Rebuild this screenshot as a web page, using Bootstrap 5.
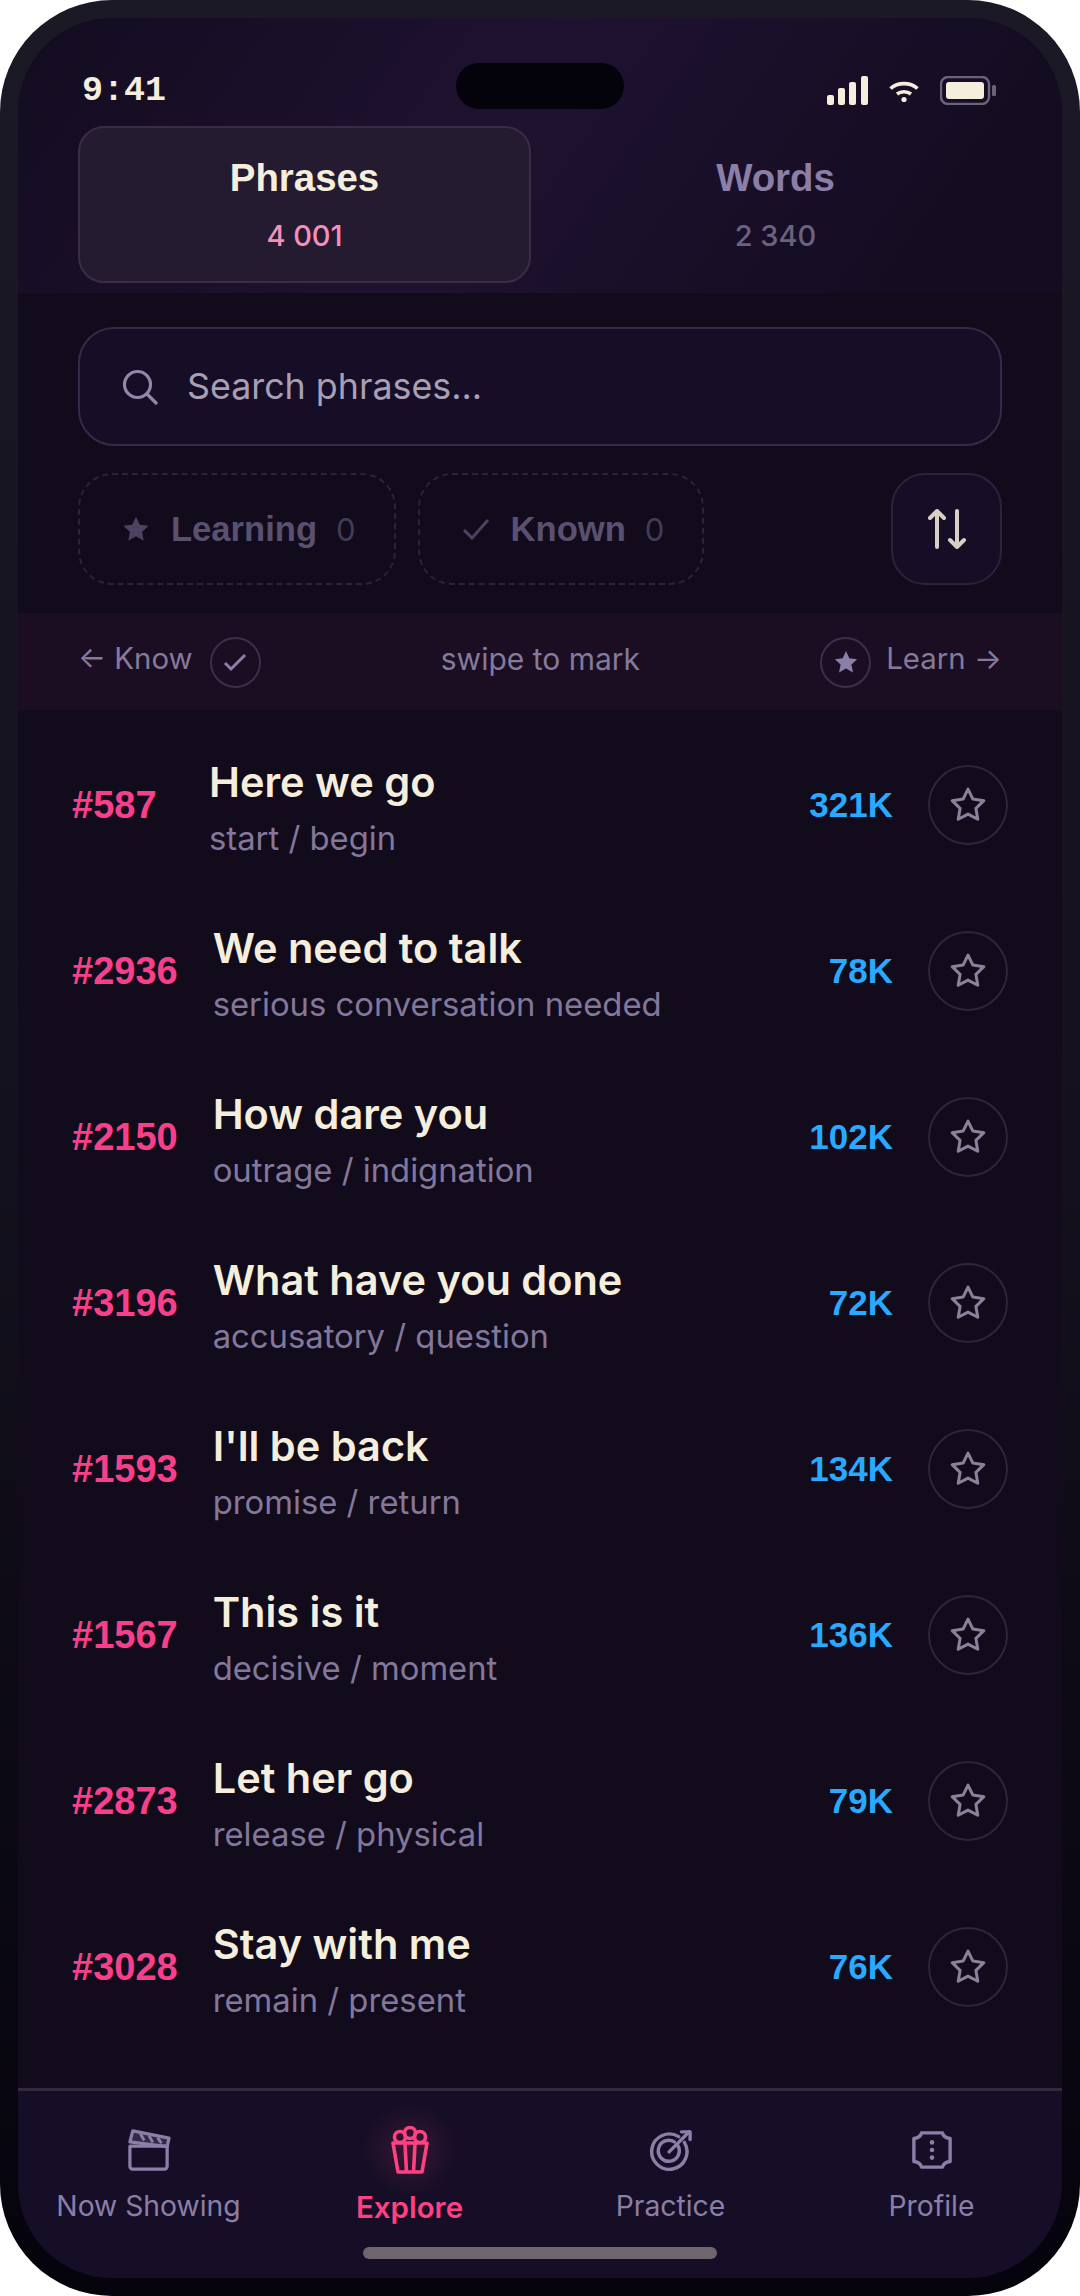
<!DOCTYPE html>
<html lang="en">
<head>
  <meta charset="UTF-8" />
  <meta name="viewport" content="width=device-width, initial-scale=1.0" />
  <title>Explore Phrases</title>
  <link href="https://cdn.jsdelivr.net/npm/bootstrap@5.3.3/dist/css/bootstrap.min.css" rel="stylesheet">
  <style>
    body { background: #fff; margin: 0; font-family: Inter, "Liberation Sans", sans-serif; }
    .phone-shell { width: 1080px; height: 2296px; padding: 18px; border-radius: 112px; background: linear-gradient(180deg, #1c1926 0%, #14111e 50%, #05030c 100%); }
    .phone-screen { height: 100%; border-radius: 94px; overflow: hidden; background: #110b1c; }
    .top-area { height: 275px; padding: 0 60px 10px; background: linear-gradient(125deg, #130c20 0%, #1f1230 45%, #140d22 85%); }
    .status-row { height: 108px; padding: 0 6px 15px 4px; position: relative; }
    .clock { font: 700 35px/40px "Liberation Mono", monospace; color: #f5eedc; }
    .island { position: absolute; left: 378px; top: 45px; width: 168px; height: 46px; border-radius: 23px; background: #04020a; }
    .seg-tab { height: 157px; width: 453px; border-radius: 26px; border: 2px solid transparent; font-family: "Liberation Sans", sans-serif; }
    .seg-tab.is-on { background: #241b30; border-color: #392c47; }
    .seg-name { font-size: 38.400px; font-weight: 700; color: #8b7fa8; line-height: 46px; }
    .seg-tab.is-on .seg-name { color: #f5eedc; }
    .seg-num { font: 500 29px/36px Inter, sans-serif; color: #6b6280; margin-top: 17px; }
    .seg-tab.is-on .seg-num { color: #f48fb8; }
    .search-box { margin: 34px 60px 0; height: 119px; padding: 0 42px; border-radius: 36px; background: #150e26; border: 2px solid #372a48; color: #a89fb5; font-size: 35.800px; gap: 29px; }
    .filter-row { margin: 27px 60px 0; height: 112px; gap: 22px; }
    .chip-dash { height: 112px; border: 2px dashed #2b2338; border-radius: 34px; padding: 0 38px 0 42px; color: #5a5070; font: 700 34.600px "Liberation Sans", sans-serif; }
    .chip-dash svg { margin-right: 21px; }
    .chip-count { font: 400 31px Inter, sans-serif; color: #453b57; margin-left: 19px; }
    .sort-btn { width: 111px; height: 112px; margin-left: auto; border: 2px solid #2b2338; border-radius: 34px; background: #150e26; }
    .hint-band { margin-top: 28px; height: 97px; padding: 0 60px 5px; background: #1b0e22; color: #847a9c; font-size: 30px; }
    .hint-side { font-size: 29.400px; }
    .hint-circle { width: 51px; height: 51px; border-radius: 50%; border: 2px solid #3b3049; margin-top: 6px; }
    .phrase-list { margin-top: 12px; --bs-list-group-bg: transparent; --bs-list-group-border-width: 0; }
    .phrase-row { height: 166px; padding: 0 54px 0 54px; gap: 35px; }
    .rank-id { min-width: 102px; font: 700 38px "Liberation Sans", sans-serif; color: #f8408a; }
    .phrase-text { padding-top: 5px; }
    .phrase-title { font-size: 41.500px; font-weight: 600; color: #f5eedc; line-height: 50px; }
    .phrase-sub { font-size: 32.800px; color: #83789b; line-height: 40px; margin-top: 11px; }
    .view-count { font: 700 35px "Liberation Sans", sans-serif; color: #29a9ff; }
    .star-btn { width: 80px; height: 80px; flex: none; border-radius: 50%; border: 2px solid #2e2638; }
    .bottom-nav { height: 190px; border-top: 3px solid #35283f; background: #150e26; position: relative; }
    .nav-cell { width: 261px; padding-top: 35px; color: #8b7fa8; font-size: 28.300px; }
    .nav-cell.is-on { color: #ff4081; font-weight: 600; font-size: 29.500px; }
    .nav-icon { height: 48px; margin-bottom: 11px; position: relative; display: flex; align-items: center; justify-content: center; }
    .nav-cell.is-on .nav-icon::before { content: ""; position: absolute; left: 50%; top: 50%; width: 96px; height: 96px; transform: translate(-50%, -50%); background: radial-gradient(circle, rgba(255,64,129,.16), rgba(255,64,129,0) 70%); }
    .nav-icon svg { position: relative; }
    .home-pill { position: absolute; left: 345px; bottom: 19px; width: 354px; height: 12px; border-radius: 6px; background: #6e666c; }
  </style>
</head>
<body>

<div class="phone-shell">
  <div class="phone-screen d-flex flex-column">

    <!-- status bar + tabs -->
    <div class="top-area">
      <div class="status-row d-flex justify-content-between align-items-end">
        <span class="clock">9:41</span>
        <div class="island"></div>
        <div class="d-flex align-items-center" style="gap:21px;margin-bottom:6px">
          <svg width="41" height="29" viewBox="0 0 41 29" fill="#f5eedc"><rect y="19" width="7" height="10" rx="2"/><rect x="11" y="12" width="7" height="17" rx="2"/><rect x="22" y="6" width="7" height="23" rx="2"/><rect x="34" width="7" height="29" rx="2"/></svg>
          <svg width="30" height="24" viewBox="0 0 30 24" fill="none" stroke="#f5eedc" stroke-width="3.600" stroke-linecap="butt"><path d="M1.500 9.500C9 3 21 3 28.500 9.500"/><path d="M8 15c4-3 10-3 14 0"/><circle cx="15" cy="20.500" r="2.600" fill="#f5eedc" stroke="none"/></svg>
          <svg width="56" height="29" viewBox="0 0 56 29"><rect x="1" y="1" width="48" height="27" rx="7" fill="none" stroke="#6b6478" stroke-width="2.400"/><rect x="6" y="6" width="38" height="17" rx="3" fill="#f5eedc"/><rect x="52" y="9" width="4" height="11" rx="1.500" fill="#6b6478"/></svg>
        </div>
      </div>
      <div class="d-flex justify-content-between">
        <div class="seg-tab is-on d-flex flex-column align-items-center justify-content-center">
          <div class="seg-name">Phrases</div>
          <div class="seg-num">4 001</div>
        </div>
        <div class="seg-tab d-flex flex-column align-items-center justify-content-center">
          <div class="seg-name">Words</div>
          <div class="seg-num">2 340</div>
        </div>
      </div>
    </div>

    <!-- search -->
    <div class="search-box d-flex align-items-center">
      <svg width="36" height="36" viewBox="0 0 36 36" fill="none" stroke="#9287ab" stroke-width="3.200" stroke-linecap="round"><circle cx="15.500" cy="15.500" r="13"/><path d="M25 25l9 9"/></svg>
      <span>Search phrases...</span>
    </div>

    <!-- filters -->
    <div class="filter-row d-flex">
      <div class="chip-dash d-flex align-items-center">
        <svg width="28" height="28" viewBox="0 0 24 24" fill="#4c4360"><polygon points="12 1.500 15.200 8.400 22.800 9.300 17.200 14.500 18.700 22 12 18.200 5.300 22 6.800 14.500 1.200 9.300 8.800 8.400"/></svg>
        <span>Learning</span><span class="chip-count">0</span>
      </div>
      <div class="chip-dash d-flex align-items-center">
        <svg width="28" height="26" viewBox="0 0 28 26" fill="none" stroke="#4c4360" stroke-width="3"><path d="M2 14l8 8L26 4"/></svg>
        <span>Known</span><span class="chip-count">0</span>
      </div>
      <button class="sort-btn btn p-0 d-flex align-items-center justify-content-center" type="button" aria-label="Sort">
        <svg width="40" height="40" viewBox="0 0 40 40" fill="none" stroke="#d8d0c4" stroke-width="4" stroke-linecap="round" stroke-linejoin="round"><path d="M10 38V2M3 9l7-7 7 7"/><path d="M30 2v36M23 31l7 7 7-7"/></svg>
      </button>
    </div>

    <!-- swipe hint -->
    <div class="hint-band d-flex align-items-center justify-content-between">
      <div class="hint-side d-flex align-items-center" style="gap:17px">
        <span>← Know</span>
        <span class="hint-circle d-flex align-items-center justify-content-center">
          <svg width="24" height="20" viewBox="0 0 24 20" fill="none" stroke="#8b7fa8" stroke-width="3"><path d="M2 11l6 6L22 3"/></svg>
        </span>
      </div>
      <span>swipe to mark</span>
      <div class="hint-side d-flex align-items-center" style="gap:15px">
        <span class="hint-circle d-flex align-items-center justify-content-center">
          <svg width="24" height="24" viewBox="0 0 24 24" fill="#8b7fa8"><polygon points="12 1 15.300 8.300 23.200 9.200 17.400 14.600 19 22.500 12 18.500 5 22.500 6.600 14.600 .8 9.200 8.700 8.300"/></svg>
        </span>
        <span>Learn →</span>
      </div>
    </div>

    <!-- phrases -->
    <div class="list-group list-group-flush phrase-list flex-grow-1" id="phraseList"></div>

    <!-- bottom nav -->
    <nav class="bottom-nav d-flex">
      <div class="nav-cell text-center">
        <div class="nav-icon">
          <svg width="46" height="42" viewBox="0 0 46 44" fill="none" stroke="#8b7fa8" stroke-width="3.400" stroke-linejoin="round"><path d="M3 18v21a3 3 0 0 0 3 3h33a3 3 0 0 0 3-3V18Z"/><path d="M6 2l38 7.500-2 9L3 13.500Z" fill="#8b7fa8" fill-opacity=".25"/><path d="M14 5l4 7M23 7l4 7M32 9l4 6" stroke-width="3"/></svg>
        </div>
        Now Showing
      </div>
      <div class="nav-cell is-on text-center">
        <div class="nav-icon">
          <svg width="38" height="48" viewBox="0 0 38 48" fill="none" stroke="#ff4081" stroke-width="3.600" stroke-linejoin="round"><path d="M2 17h34l-5 29H7Z"/><path d="M14 18l1.500 28M24 18l-1.500 28"/><circle cx="9" cy="11" r="5.500"/><circle cx="19" cy="7" r="5.500"/><circle cx="29" cy="11" r="5.500"/></svg>
        </div>
        Explore
      </div>
      <div class="nav-cell text-center">
        <div class="nav-icon">
          <svg width="44" height="42" viewBox="0 0 44 44" fill="none" stroke="#8b7fa8" stroke-width="3.600" stroke-linecap="round" stroke-linejoin="round"><path d="M36 14a18.500 18.500 0 1 1-6-6"/><path d="M29 17a11 11 0 1 1-3.500-3.500"/><path d="M20 24L41 3"/><path d="M33 3h9v8"/></svg>
        </div>
        Practice
      </div>
      <div class="nav-cell text-center">
        <div class="nav-icon">
          <svg width="44" height="40" viewBox="0 0 44 42" fill="#8b7fa8"><path d="M11 3h22q1 5 8 6v24q-7 1-8 6H11q-1-5-8-6V9q7-1 8-6Z" fill="none" stroke="#8b7fa8" stroke-width="3.600" stroke-linejoin="round"/><circle cx="22" cy="13" r="2.400"/><circle cx="22" cy="21" r="2.400"/><circle cx="22" cy="29" r="2.400"/></svg>
        </div>
        Profile
      </div>
      <div class="home-pill"></div>
    </nav>

  </div>
</div>

<script>
  const phrases = [
    ["#587", "Here we go", "start / begin", "321K"],
    ["#2936", "We need to talk", "serious conversation needed", "78K"],
    ["#2150", "How dare you", "outrage / indignation", "102K"],
    ["#3196", "What have you done", "accusatory / question", "72K"],
    ["#1593", "I'll be back", "promise / return", "134K"],
    ["#1567", "This is it", "decisive / moment", "136K"],
    ["#2873", "Let her go", "release / physical", "79K"],
    ["#3028", "Stay with me", "remain / present", "76K"]
  ];

  document.getElementById("phraseList").innerHTML = phrases.map(p => `
    <div class="phrase-row d-flex align-items-center">
      <span class="rank-id">${p[0]}</span>
      <div class="phrase-text flex-grow-1">
        <div class="phrase-title">${p[1]}</div>
        <div class="phrase-sub">${p[2]}</div>
      </div>
      <span class="view-count">${p[3]}</span>
      <span class="star-btn d-flex align-items-center justify-content-center">
        <svg width="38" height="38" viewBox="0 0 24 24" fill="none" stroke="#8b8299" stroke-width="1.900" stroke-linejoin="round"><polygon points="12 2 15.090 8.260 22 9.270 17 14.140 18.180 21.020 12 17.770 5.820 21.020 7 14.140 2 9.270 8.910 8.260"/></svg>
      </span>
    </div>`).join("");
</script>

<script src="https://cdn.jsdelivr.net/npm/bootstrap@5.3.3/dist/js/bootstrap.bundle.min.js"></script>
</body>
</html>
